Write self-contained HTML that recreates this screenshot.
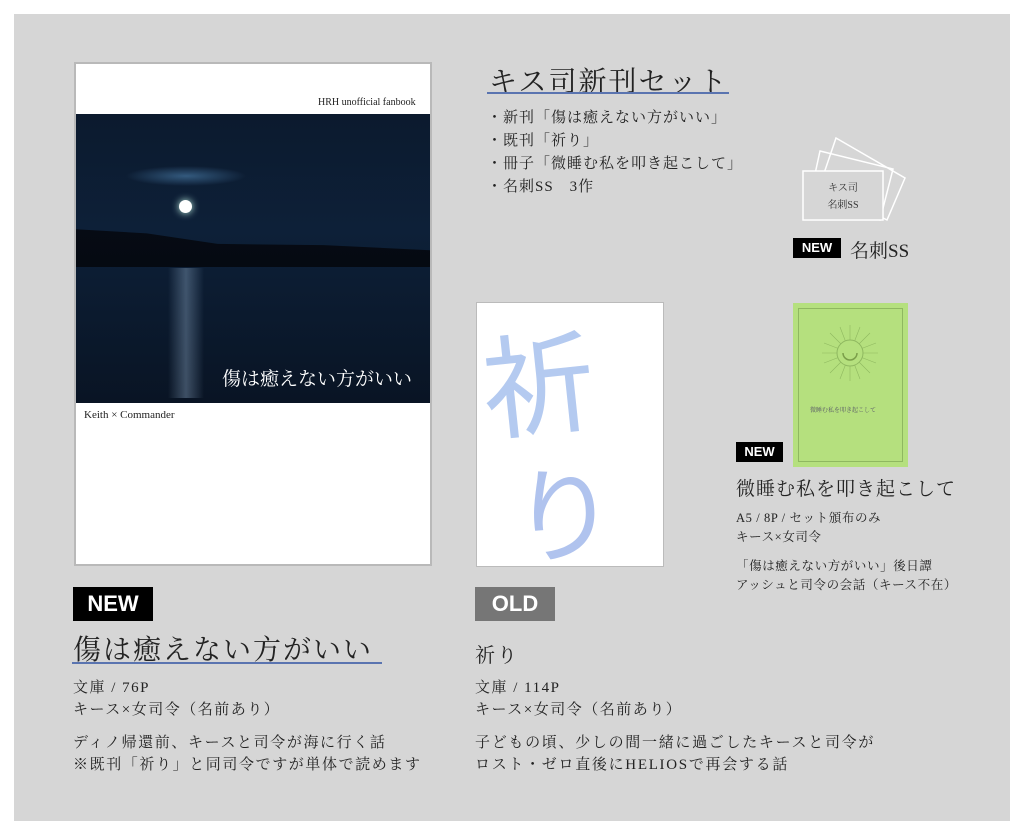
<!DOCTYPE html>
<html><head><meta charset="utf-8"><style>
body{margin:0;width:1024px;height:835px;background:#fff;position:relative;overflow:hidden;font-family:"Liberation Serif","Noto Serif CJK SC","Noto Serif CJK JP","Noto Sans CJK JP",serif;color:#222}
.a{position:absolute;white-space:nowrap}
.panel{left:14px;top:14px;width:996px;height:807px;background:#d6d6d6}
.badge{background:#000;color:#fff;font-family:"Liberation Sans",sans-serif;font-weight:bold;text-align:center}
</style></head><body>
<div class="a panel"></div>
<!-- cover 1 -->
<div class="a" style="left:74px;top:62px;width:354px;height:500px;background:#fff;border:2px solid #b9b9b9"></div>
<div class="a" style="left:318px;top:97px;font-size:10px;color:#222">HRH unofficial fanbook</div>
<div class="a" style="left:76px;top:114px;width:354px;height:289px;background:radial-gradient(ellipse 60px 10px at 110px 62px,rgba(90,150,200,.5),transparent),linear-gradient(#0c1a2e 0%,#0d2038 40%,#091424 100%)"></div>
<div class="a" style="left:76px;top:225px;width:354px;height:42px;background:linear-gradient(#060b14,#050a12);clip-path:polygon(0 10%,20% 20%,40% 45%,70% 48%,100% 60%,100% 100%,0 100%)"></div>
<div class="a" style="left:168px;top:268px;width:36px;height:130px;background:linear-gradient(90deg,transparent,rgba(160,190,220,.35),transparent)"></div>
<div class="a" style="left:179px;top:200px;width:13px;height:13px;border-radius:50%;background:#fff;box-shadow:0 0 8px #cfe"></div>
<div class="a" style="left:222px;top:364px;font-size:19px;color:#fff;letter-spacing:0px">傷は癒えない方がいい</div>
<div class="a" style="left:84px;top:409px;font-size:11px">Keith × Commander</div>
<!-- set title -->
<div class="a" style="left:489px;top:60px;font-size:28px;letter-spacing:2px">キス司新刊セット</div>
<div class="a" style="left:487px;top:92px;width:242px;height:2px;background:#5a74b0"></div>
<div class="a" style="left:487px;top:107px;font-size:15px;line-height:23px;letter-spacing:1px">・新刊「傷は癒えない方がいい」<br>・既刊「祈り」<br>・冊子「微睡む私を叩き起こして」<br>・名刺SS　3作</div>
<!-- cards -->
<svg class="a" style="left:800px;top:135px" width="110" height="90"><g fill="none" stroke="#fff" stroke-width="1.5"><polygon points="36,3 105,43 87,85 20,50"/><polygon points="20,16 93,34 80,85 10,62"/><rect x="3" y="36" width="80" height="49" fill="#d6d6d6"/></g><text x="43" y="56" font-size="10" text-anchor="middle" fill="#333">キス司</text><text x="43" y="73" font-size="10" text-anchor="middle" fill="#333">名刺SS</text></svg>
<div class="a badge" style="left:793px;top:238px;width:48px;height:20px;font-size:13px;line-height:20px">NEW</div>
<div class="a" style="left:850px;top:236px;font-size:19px">名刺SS</div>
<!-- 祈り cover -->
<div class="a" style="left:476px;top:302px;width:186px;height:263px;background:#fff;border:1px solid #bbb"></div>
<div class="a" style="left:482px;top:318px;font-size:112px;line-height:120px;color:#b4caf0;font-family:'Noto Sans CJK JP',sans-serif;transform:rotate(-6deg);">祈</div>
<div class="a" style="left:512px;top:452px;font-size:104px;line-height:114px;color:#b0c3ee;font-family:'Noto Sans CJK JP',sans-serif;height:113px;overflow:hidden">り</div>
<!-- green cover -->
<div class="a" style="left:793px;top:303px;width:115px;height:164px;background:#b5e07e"></div>
<div class="a" style="left:798px;top:308px;width:103px;height:152px;border:1px solid #8fb860"></div>
<svg class="a" style="left:822px;top:325px" width="56" height="56"><g stroke="#8fb860" fill="none"><g stroke-width=".6"><path d="M28 0v56M0 28h56M8 8l40 40M48 8L8 48M18 2l20 52M38 2L18 54M2 18l52 20M2 38l52-20"/></g></g><circle cx="28" cy="28" r="13" fill="#b5e07e" stroke="#8fb860"/><path d="M21 28a7 7 0 0 0 14 0" stroke="#7a9e4a" fill="none" stroke-width="1.5"/></svg>
<div class="a" style="left:810px;top:405px;font-size:6px;color:#556">微睡む私を叩き起こして</div>
<div class="a badge" style="left:736px;top:442px;width:47px;height:20px;font-size:13px;line-height:20px">NEW</div>
<div class="a" style="left:736px;top:474px;font-size:19px;letter-spacing:1px">微睡む私を叩き起こして</div>
<div class="a" style="left:736px;top:509px;font-size:12.5px;line-height:19px;letter-spacing:.6px">A5 / 8P / セット頒布のみ<br>キース×女司令</div>
<div class="a" style="left:736px;top:557px;font-size:12.5px;line-height:19px;letter-spacing:.6px">「傷は癒えない方がいい」後日譚<br>アッシュと司令の会話（キース不在）</div>
<!-- bottom left -->
<div class="a badge" style="left:73px;top:587px;width:80px;height:34px;font-size:22px;line-height:34px">NEW</div>
<div class="a" style="left:73px;top:628px;font-size:28px;letter-spacing:2px">傷は癒えない方がいい</div>
<div class="a" style="left:72px;top:662px;width:310px;height:2px;background:#5a74b0"></div>
<div class="a" style="left:73px;top:677px;font-size:15px;line-height:22px;letter-spacing:1.5px">文庫 / 76P<br>キース×女司令（名前あり）</div>
<div class="a" style="left:73px;top:732px;font-size:15px;line-height:22px;letter-spacing:1.6px">ディノ帰還前、キースと司令が海に行く話<br>※既刊「祈り」と同司令ですが単体で読めます</div>
<!-- bottom middle -->
<div class="a badge" style="left:475px;top:587px;width:80px;height:34px;font-size:22px;line-height:34px;background:#767676">OLD</div>
<div class="a" style="left:475px;top:639px;font-size:20px;letter-spacing:2px">祈り</div>
<div class="a" style="left:475px;top:677px;font-size:15px;line-height:22px;letter-spacing:1.5px">文庫 / 114P<br>キース×女司令（名前あり）</div>
<div class="a" style="left:475px;top:732px;font-size:15px;line-height:22px;letter-spacing:1.7px">子どもの頃、少しの間一緒に過ごしたキースと司令が<br>ロスト・ゼロ直後にHELIOSで再会する話</div>
</body></html>
